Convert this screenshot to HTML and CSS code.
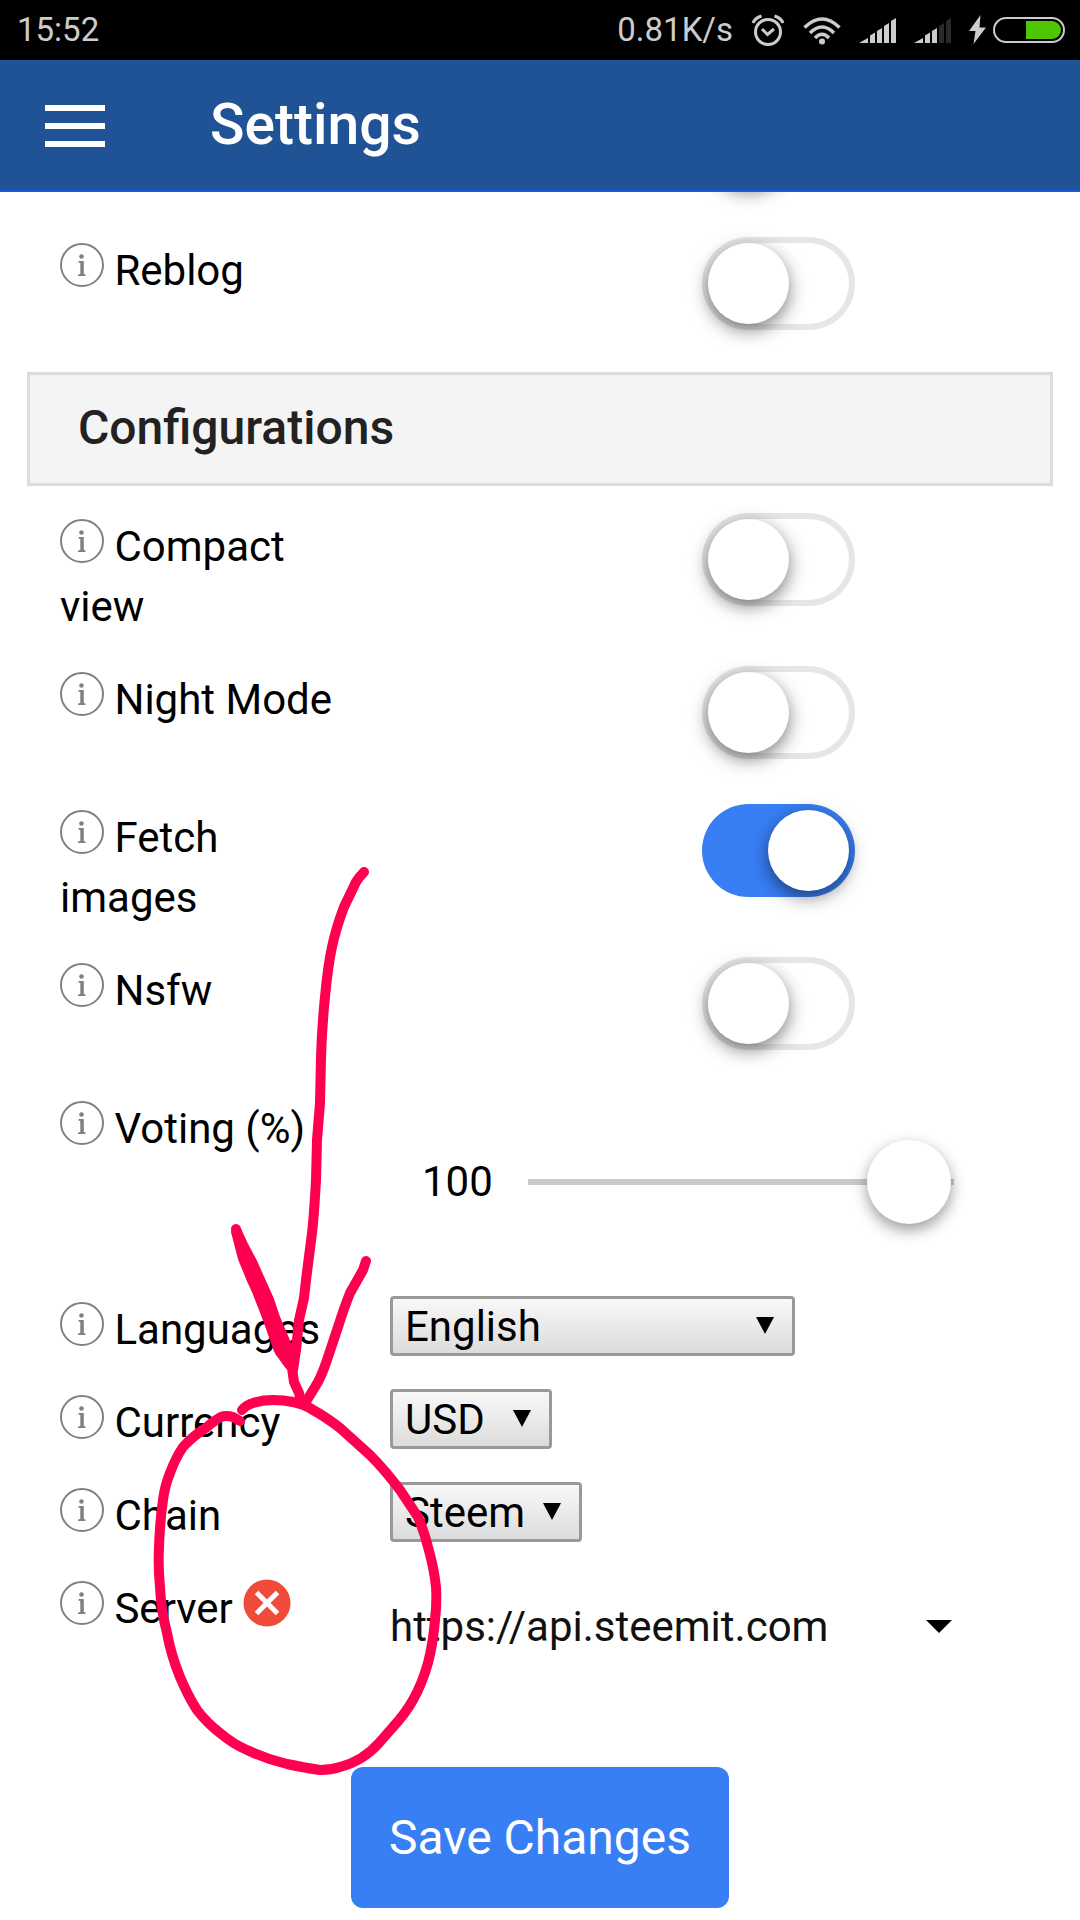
FILE: index.html
```html
<!DOCTYPE html>
<html lang="en">
<head>
    <meta charset="UTF-8">
    <meta name="viewport" content="width=device-width, initial-scale=1.0">
    <title>Settings</title>
    <link rel="stylesheet" href="styles.css">
</head>
<body>
    <!-- shared info icon -->
    <svg class="defs" width="0" height="0">
        <symbol id="info" viewBox="0 0 44 44">
            <circle cx="22" cy="22" r="21" fill="none" stroke="#808080" stroke-width="2"/>
            <circle cx="21.500" cy="13.500" r="2.300" fill="#808080"/>
            <path fill="#808080" d="M18.500 18h5.300v13l1.700.500V33h-7.500v-1.500l2.300-.500V20l-1.800-.500z"/>
        </symbol>
    </svg>

    <div class="status-bar">
        <span class="time">15:52</span>
        <div class="status-icons">
            <span>0.81K/s</span>
            <svg width="34" height="34" viewBox="0 0 34 34" fill="none" stroke="#ccc" stroke-width="3">
                <circle cx="17" cy="19" r="12.500"/>
                <path d="M11 16l5.500 5.500 6.500-5.500"/>
                <path d="M2 10Q4 5 10.500 3M32 10Q30 5 23.500 3"/>
            </svg>
            <svg width="38" height="34" viewBox="0 0 38 34" fill="none" stroke="#ccc" stroke-width="3.500">
                <path d="M1.500 14.500Q19 -2.500 36.500 14.500M7 20Q19 8 31 20M12 25Q19 17.500 26 25"/>
                <circle cx="19" cy="28.500" r="3" fill="#ccc" stroke="none"/>
            </svg>
            <svg width="37" height="34" viewBox="0 0 37 34" fill="#ccc">
                <path d="M0 30L9 25v5zM11 22.500l5-3V30h-5zM18 18l5-3v15h-5zM25 13l5-3v20h-5zM32 8l5-3v25h-5z"/>
            </svg>
            <svg width="37" height="34" viewBox="0 0 37 34" fill="#ccc">
                <path d="M0 30L9 25v5zM11 22.500l5-3V30h-5zM18 18l5-3v15h-5z"/>
                <path fill="#2a2a2a" d="M25 13l5-3v20h-5zM32 8l5-3v25h-5z"/>
            </svg>
            <div class="power">
                <svg width="17" height="34" viewBox="0 0 17 34" fill="#ccc">
                    <path d="M11.500 2L0 18h6.500L4.500 31 17 14.500h-6.500z"/>
                </svg>
                <svg width="72" height="34" viewBox="0 0 72 34">
                    <rect x="1" y="5" width="70" height="24" rx="12" fill="none" stroke="#ccc" stroke-width="2"/>
                    <path fill="#4cc700" d="M33 8h26a9 9 0 0 1 0 18H33z"/>
                </svg>
            </div>
        </div>
    </div>

    <header class="toolbar">
        <button class="menu-button" aria-label="Menu">
            <span></span>
            <span></span>
            <span></span>
        </button>
        <h1>Settings</h1>
    </header>

    <main class="content">
        <div class="scrolled-knob"></div>

        <div class="rows">
            <div class="row">
                <div class="name"><button class="info" aria-label="Info"><svg><use href="#info"/></svg></button> <label for="reblog">Reblog</label></div>
                <div class="toggle-cell"><input class="toggle" type="checkbox" id="reblog"></div>
            </div>
        </div>

        <h2>Configurations</h2>

        <div class="rows">
            <div class="row">
                <div class="name"><button class="info" aria-label="Info"><svg><use href="#info"/></svg></button> <label for="compact">Compact view</label></div>
                <div class="toggle-cell"><input class="toggle" type="checkbox" id="compact"></div>
            </div>
            <div class="row">
                <div class="name"><button class="info" aria-label="Info"><svg><use href="#info"/></svg></button> <label for="night">Night Mode</label></div>
                <div class="toggle-cell"><input class="toggle" type="checkbox" id="night"></div>
            </div>
            <div class="row">
                <div class="name"><button class="info" aria-label="Info"><svg><use href="#info"/></svg></button> <label for="images">Fetch images</label></div>
                <div class="toggle-cell"><input class="toggle" type="checkbox" id="images" checked></div>
            </div>
            <div class="row">
                <div class="name"><button class="info" aria-label="Info"><svg><use href="#info"/></svg></button> <label for="nsfw">Nsfw</label></div>
                <div class="toggle-cell"><input class="toggle" type="checkbox" id="nsfw"></div>
            </div>
            <div class="row">
                <div class="name"><button class="info" aria-label="Info"><svg><use href="#info"/></svg></button> <label for="voting">Voting (%)</label></div>
                <div class="range-cell">
                    <output for="voting">100</output>
                    <input class="range" type="range" id="voting" min="0" max="100" value="100">
                </div>
            </div>
            <div class="row short">
                <div class="name"><button class="info" aria-label="Info"><svg><use href="#info"/></svg></button> <label for="language">Languages</label></div>
                <div class="select language">
                    <select id="language"><option>English</option></select>
                    <svg class="arrow" width="18" height="17" viewBox="0 0 18 17"><path d="M0 0h18L9 17z"/></svg>
                </div>
            </div>
            <div class="row short">
                <div class="name"><button class="info" aria-label="Info"><svg><use href="#info"/></svg></button> <label for="currency">Currency</label></div>
                <div class="select currency">
                    <select id="currency"><option>USD</option></select>
                    <svg class="arrow" width="18" height="17" viewBox="0 0 18 17"><path d="M0 0h18L9 17z"/></svg>
                </div>
            </div>
            <div class="row short">
                <div class="name"><button class="info" aria-label="Info"><svg><use href="#info"/></svg></button> <label for="chain">Chain</label></div>
                <div class="select chain">
                    <select id="chain"><option>Steem</option></select>
                    <svg class="arrow" width="18" height="17" viewBox="0 0 18 17"><path d="M0 0h18L9 17z"/></svg>
                </div>
            </div>
            <div class="row short">
                <div class="name">
                    <button class="info" aria-label="Info"><svg><use href="#info"/></svg></button> <label for="server">Server</label>
                    <svg class="server-error" width="48" height="48" viewBox="0 0 48 48">
                        <circle cx="24" cy="24" r="23.500" fill="#f04a3a"/>
                        <path d="M13.500 13.500l21 21M34.500 13.500l-21 21" stroke="#fff" stroke-width="5"/>
                    </svg>
                </div>
                <div class="server">
                    <select id="server"><option>https://api.steemit.com</option></select>
                    <svg class="arrow" width="26" height="13" viewBox="0 0 26 13"><path d="M0 0h26L13 13z"/></svg>
                </div>
            </div>
        </div>

        <button class="save">Save Changes</button>
    </main>

    <!-- hand-drawn marker: arrow and circle round the server row -->
    <svg class="marker" width="480" height="1920" viewBox="0 0 480 1920" fill="none" stroke="#ff0050" stroke-width="10" stroke-linecap="round" stroke-linejoin="round">
        <path d="M364 872Q359 877 356 882L344 907Q336 928 332 947Q328 965 325 997Q322 1026 321 1057L320 1103L317 1140L316 1180Q314 1216 312 1233L306 1280L304 1298L299 1320L296 1350L293 1370"/>
        <path d="M236 1229L243 1255L253 1276L260 1297L280 1352L292 1368L294 1382L299 1393L301 1402"/>
        <path stroke-width="2" fill="#ff0050" d="M232 1232L239 1259L248 1281L253 1292L264 1320L275 1351L286 1367L296 1365L293 1350L290 1343L279 1317L273 1299L260 1270L256 1261L247 1244L240 1229z"/>
        <path d="M366 1261L363 1270L350 1293Q344 1308 338 1327L327 1360Q321 1378 315 1387L307 1400"/>
        <path d="M242 1410Q246 1405 253 1403Q262 1400 273 1400Q284 1400 293 1402Q304 1404 313 1410Q326 1417 340 1428L370 1455Q385 1470 400 1490L418 1517Q424 1531 428 1547Q434 1568 436 1587Q437 1603 435 1620Q433 1644 428 1663Q422 1684 413 1700Q405 1714 393 1727L379 1743Q363 1761 340 1767Q331 1770 320 1770Q306 1768 287 1764Q266 1759 247 1750Q233 1744 220 1733Q207 1723 197 1710Q188 1696 180 1677Q171 1655 167 1633Q161 1610 160 1587Q158 1567 159 1547Q160 1520 163 1500Q165 1485 170 1473Q176 1457 183 1447Q193 1436 207 1427Q215 1420 221 1417Q226 1415 233 1417L240 1421"/>
    </svg>
</body>
</html>
```
FILE: styles.css
```css
* {
    box-sizing: border-box;
}
body {
    margin: 0;
    font-family: Roboto, sans-serif;
    font-size: 42px;
    line-height: 60px;
    color: #000;
    background-color: #fff;
    position: relative;
}
button, input, select {
    margin: 0;
    padding: 0;
    border: none;
    font-family: inherit;
    font-size: inherit;
    color: inherit;
    background: none;
    -webkit-appearance: none;
    appearance: none;
}
svg {
    display: block;
}
.defs {
    position: absolute;
}

/* Phone status bar */
.status-bar {
    display: flex;
    justify-content: space-between;
    align-items: center;
    height: 60px;
    padding: 0 15px 0 17px;
    font-size: 33px;
    color: #ccc;
    background-color: #000;
}
.status-icons {
    display: flex;
    align-items: center;
    gap: 18px;
}
.power {
    display: flex;
    gap: 7px;
}

/* Header */
.toolbar {
    display: flex;
    align-items: center;
    gap: 105px;
    height: 132px;
    padding: 2px 45px 0;
    color: #fff;
    background-color: #205396;
    border-bottom: 2px solid #135bd8;
}
.menu-button {
    display: flex;
    flex-direction: column;
    gap: 12px;
    width: 60px;
}
.menu-button span {
    height: 6px;
    background-color: #fff;
}
.toolbar h1 {
    margin: 0;
    padding-bottom: 3px;
    font-size: 57px;
    font-weight: 500;
}

/* Settings list */
.content {
    position: relative;
    overflow: hidden;
    padding: 45px 0 12px;
}
/* knob of the row scrolled under the header, only its shadow shows */
.scrolled-knob {
    position: absolute;
    top: -87px;
    left: 708px;
    width: 81px;
    height: 81px;
    border-radius: 50%;
    box-shadow: 0 6px 18px rgba(0,0,0,0.5);
}
.rows {
    display: flex;
    flex-direction: column;
    gap: 29px;
    padding: 0 60px;
}
.row {
    display: grid;
    grid-template-columns: 30% 1fr;
    column-gap: 42px;
    align-items: start;
    min-height: 109px;
}
.row.short {
    min-height: 64px;
}
.name {
    padding-top: 4px;
}
.info {
    width: 44px;
    height: 44px;
    vertical-align: -2px;
}
.info svg {
    width: 44px;
    height: 44px;
}
h2 {
    margin: 26px 27px 27px;
    padding: 23px 48px 25px;
    border: 3px solid #dcdcdc;
    font-size: 48px;
    font-weight: 500;
    color: #222;
    background-color: #f4f4f4;
}

/* Toggles */
.toggle-cell {
    padding-left: 312px;
}
.toggle {
    display: block;
    width: 153px;
    height: 93px;
    padding: 6px;
    border-radius: 47px;
    background-color: #fff;
    box-shadow: inset 0 0 0 6px #e6e6e6;
}
.toggle::before {
    content: "";
    display: block;
    width: 81px;
    height: 81px;
    border-radius: 50%;
    background-color: #fff;
    box-shadow: 0 6px 18px rgba(0,0,0,0.5);
}
.toggle:checked {
    background-color: #387ef5;
    box-shadow: none;
}
.toggle:checked::before {
    margin-left: auto;
}

/* Slider */
.range-cell {
    display: flex;
    align-items: center;
    gap: 35px;
    height: 172px;
    padding: 2px 66px 0 32px;
}
.range {
    flex: 1;
    min-width: 0;
    height: 84px;
    padding: 0 3px;
    background: linear-gradient(#cacaca, #cacaca) center / 100% 6px no-repeat;
}
.range::-webkit-slider-thumb {
    -webkit-appearance: none;
    width: 84px;
    height: 84px;
    border-radius: 50%;
    background-color: #fff;
    box-shadow: 0 6px 15px rgba(0,0,0,0.4);
}

/* Drop-downs */
.select, .server {
    position: relative;
}
.select select {
    display: block;
    width: 100%;
    height: 60px;
    padding: 0 12px;
    border: 3px solid #999;
    border-radius: 4px;
    background: linear-gradient(#f8f8f8, #dcdcdc);
}
.language {
    width: 405px;
}
.currency {
    width: 162px;
}
.chain {
    width: 192px;
}
.arrow {
    position: absolute;
    top: 21px;
    right: 21px;
    pointer-events: none;
}
.server-error {
    display: inline-block;
    vertical-align: -4px;
}
.server {
    padding: 21px 0 23px;
}
.server select {
    display: block;
    width: 100%;
    height: 60px;
    color: #111;
}
.server .arrow {
    top: 45px;
    right: 68px;
}

.save {
    display: block;
    margin: 88px auto 0;
    padding: 0 38px;
    height: 141px;
    border-radius: 12px;
    font-size: 48px;
    color: #fff;
    background-color: #387ef5;
}

.marker {
    position: absolute;
    top: 0;
    left: 0;
    pointer-events: none;
}
```
